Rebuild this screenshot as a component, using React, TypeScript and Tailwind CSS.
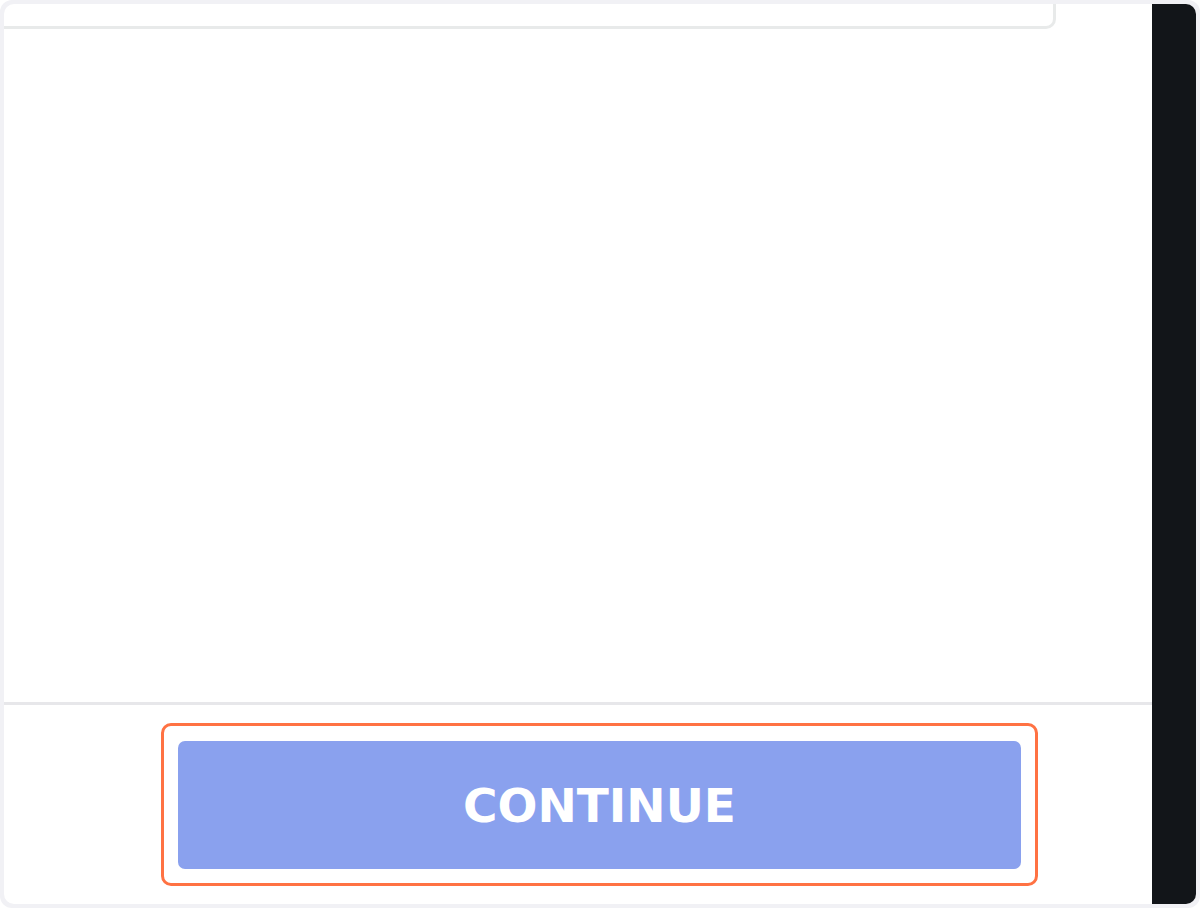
export default function App() {
  return (
    <div className="w-[1200px] h-[908px] bg-[#f1f1f5] p-[4px] rounded-[12px]">
      <div className="flex h-full w-full overflow-hidden rounded-[10px] bg-white">
        <div className="flex min-w-0 flex-1 flex-col">
          <div className="-ml-[20px] h-[25px] w-[1072px] shrink-0 rounded-br-[10px] border-r-[3px] border-b-[3px] border-[#e8eaea]" />
          <div className="flex-1" />
          <div className="h-[3px] shrink-0 bg-[#e7e7ea]" />
          <div className="flex h-[199px] shrink-0 pt-[18px] pl-[157px] pr-[114px]">
            <div className="flex h-[163px] w-full rounded-[10px] border-[3px] border-[#ff7243] p-[14px] pt-[15px]">
              <button className="flex h-[128px] w-full items-center justify-center rounded-[7px] bg-[#8aa1ee] pt-[2px] text-[47px] font-bold text-white [font-family:'DejaVu_Sans',Verdana,sans-serif]">
                CONTINUE
              </button>
            </div>
          </div>
        </div>
        <div className="w-[44px] shrink-0 rounded-br-[4px] bg-[#121519]" />
      </div>
    </div>
  );
}
